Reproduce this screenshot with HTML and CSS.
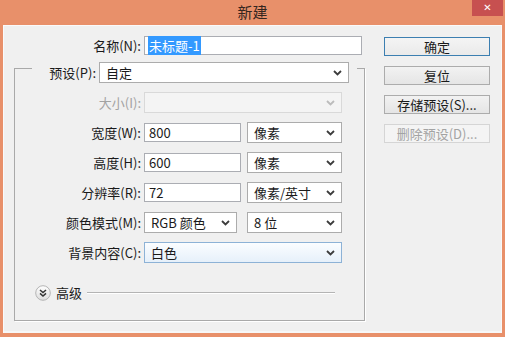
FILE: index.html
```html
<!DOCTYPE html>
<html lang="zh-CN">
<head>
<meta charset="UTF-8" />
<title>新建</title>
<link rel="stylesheet" href="styles.css">
</head>
<body>

<div class="window">
  <div class="titlebar">
    <span></span>
    <div class="title">新建</div>
    <button class="close">✕</button>
  </div>

  <div class="client">
    <div class="form">
      <div class="row name-row">
        <label class="lbl">名称(N):</label>
        <div class="input name"><span class="sel">未标题-1</span></div>
      </div>

      <div class="group">
        <div class="preset-row">
          <label class="lbl">预设(P):</label>
          <div class="select preset"><span>自定</span><svg class="chev" width="9" height="6" viewBox="0 0 9 6"><polyline points="1,1 4.5,4.5 8,1" /></svg></div>
        </div>

        <div class="row off">
          <label class="lbl">大小(I):</label>
          <div class="select full dis"><span></span><svg class="chev" width="9" height="6" viewBox="0 0 9 6"><polyline points="1,1 4.5,4.5 8,1" /></svg></div>
        </div>

        <div class="row">
          <label class="lbl">宽度(W):</label>
          <div class="input num">800</div>
          <div class="select unit"><span>像素</span><svg class="chev" width="9" height="6" viewBox="0 0 9 6"><polyline points="1,1 4.5,4.5 8,1" /></svg></div>
        </div>

        <div class="row">
          <label class="lbl">高度(H):</label>
          <div class="input num">600</div>
          <div class="select unit"><span>像素</span><svg class="chev" width="9" height="6" viewBox="0 0 9 6"><polyline points="1,1 4.5,4.5 8,1" /></svg></div>
        </div>

        <div class="row">
          <label class="lbl">分辨率(R):</label>
          <div class="input num">72</div>
          <div class="select unit"><span>像素/英寸</span><svg class="chev" width="9" height="6" viewBox="0 0 9 6"><polyline points="1,1 4.5,4.5 8,1" /></svg></div>
        </div>

        <div class="row">
          <label class="lbl">颜色模式(M):</label>
          <div class="select mode"><span>RGB 颜色</span><svg class="chev" width="9" height="6" viewBox="0 0 9 6"><polyline points="1,1 4.5,4.5 8,1" /></svg></div>
          <div class="select unit bits"><span>8 位</span><svg class="chev" width="9" height="6" viewBox="0 0 9 6"><polyline points="1,1 4.5,4.5 8,1" /></svg></div>
        </div>

        <div class="row">
          <label class="lbl">背景内容(C):</label>
          <div class="select full hot"><span>白色</span><svg class="chev" width="9" height="6" viewBox="0 0 9 6"><polyline points="1,1 4.5,4.5 8,1" /></svg></div>
        </div>

        <div class="advanced">
          <svg class="toggle" width="16" height="16" viewBox="0 0 16 16">
            <defs>
              <linearGradient id="tg" x1="0" y1="0" x2="0" y2="1">
                <stop offset="0" stop-color="#ffffff" />
                <stop offset="1" stop-color="#dcdcdc" />
              </linearGradient>
            </defs>
            <circle cx="8" cy="8" r="7.3" fill="url(#tg)" stroke="#b4b4b4" />
            <polyline points="5,5 8,7.6 11,5" />
            <polyline points="5,8.4 8,11 11,8.4" />
          </svg>
          <span class="adv-text">高级</span>
          <div class="adv-line"></div>
        </div>
      </div>
    </div>

    <div class="buttons">
      <button class="btn default">确定</button>
      <button class="btn">复位</button>
      <button class="btn">存储预设(S)...</button>
      <button class="btn" disabled>删除预设(D)...</button>
    </div>
  </div>
</div>

</body>
</html>
```

FILE: styles.css
```css
body {
  margin: 0; background: #e8906a;
  font-family: "Noto Sans CJK SC", "Noto Sans", sans-serif; font-size: 13px; color: #1a1a1a;
}
.window {
  width: 505px; height: 337px; display: flex; flex-direction: column;
  background: #e8906a;
}

/* title bar */
.titlebar {
  height: 25px; display: grid; grid-template-columns: 1fr auto 1fr;
}
.title {
  font-size: 15px; line-height: 24px; color: #35261f;
}
.close {
  justify-self: end; align-self: start; margin: 0 2px 0 0; padding: 0;
  width: 31px; height: 16px; border: none; background: #c75050;
  color: #fff; font-size: 10px; font-weight: bold; line-height: 16px;
  font-family: "DejaVu Sans", sans-serif;
}

/* client area */
.client {
  flex: 1; margin: 0 3px 4px; background: #f0f0f0; display: flex;
  box-shadow: inset 1px 1px 0 #fafafa, inset -5px -6px 0 -4px #f7f7f7;
}
.form { width: 362px; }

.row { display: flex; align-items: center; height: 21px; }
.lbl {
  box-sizing: border-box; text-align: right; padding-right: 3px; white-space: nowrap;
}
.name-row { margin-top: 10px; }
.name-row .lbl { width: 141px; }

.input {
  box-sizing: border-box; height: 19px; border: 1px solid #abadb3; background: #fff;
  padding-left: 4px; line-height: 17px; color: #1a1a1a;
}
.input.name { width: 218px; padding-left: 3px; }
.input.num { width: 97px; }
.sel { background: #3399ff; color: #fff; padding: 0 1px; }

.select {
  box-sizing: border-box; height: 21px; border: 1px solid #acacac; background: #fff;
  display: flex; align-items: center; justify-content: space-between;
  padding: 0 6px 0 6px; color: #1a1a1a;
}
.chev { fill: none; stroke: #3c3c3c; stroke-width: 1.8; }
.select.full { width: 198px; }
.select.unit { width: 95px; margin-left: 6px; }
.select.mode { width: 93px; }
.select.bits { margin-left: 10px; }
.select.preset { width: 250px; }
.select.dis { background: #f4f4f4; border-color: #d9d9d9; }
.select.dis .chev { stroke: #bcbcbc; }
.select.hot {
  border-color: #8db2d6;
  background: linear-gradient(#fbfdff, #e6f0fa);
}

/* group box */
.group {
  box-sizing: border-box; width: 351px; margin: 12px 0 0 11px;
  border: 1px solid #a9a9a9; box-shadow: 1px 1px 0 #fff;
  padding-bottom: 19px;
}
.group .row { margin-top: 9px; }
.group .row .lbl { width: 129px; }
.row.off .lbl { color: #a3a3a3; }

.preset-row {
  display: flex; align-items: center; height: 21px; width: 325px;
  margin: -7px 0 0 17px; background: #f0f0f0;
}
.preset-row .lbl { width: 67px; }

.advanced {
  display: flex; align-items: center; height: 17px; margin: 21px 29px 0 20px;
}
.toggle polyline { fill: none; stroke: #333; stroke-width: 1.5; }
.adv-text { margin-left: 5px; }
.adv-line {
  flex: 1; margin-left: 5px; border-top: 1px solid #b4b4b4; border-bottom: 1px solid #fff;
}

/* buttons */
.buttons {
  display: flex; flex-direction: column; gap: 10px; margin: 12px 0 0 19px;
}
.btn {
  width: 106px; height: 19px; padding: 0; font: inherit; color: #1a1a1a;
  border: 1px solid #acacac; background: linear-gradient(#f2f2f2, #e5e5e5);
  line-height: 16px;
}
.btn.default { border-color: #3c7fb1; background: linear-gradient(#f4f4f4, #eaeaea); }
.btn:disabled { border-color: #d5d5d5; background: #f4f4f4; color: #a3a3a3; }
```
